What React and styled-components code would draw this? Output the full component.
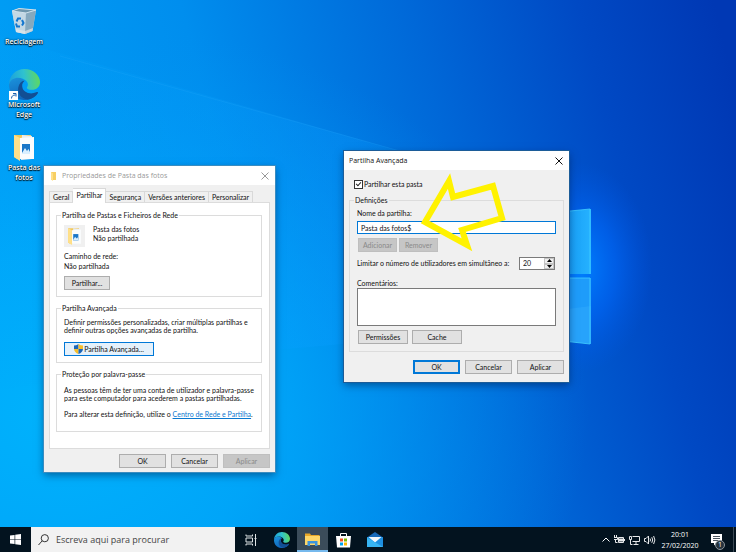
import { useState } from "react";
import styled, { createGlobalStyle, css } from "styled-components";

export default function App() {
  return (
    <>
      <GlobalStyle />
      <Screen>
        <Wallpaper />
        <Desktop>
          <Shortcut href="#reciclagem">
            <ShortcutPicture>
              <RecycleBinIcon />
            </ShortcutPicture>
            <ShortcutLabel>Reciclagem</ShortcutLabel>
          </Shortcut>
          <Shortcut href="#edge">
            <ShortcutPicture>
              <EdgeIcon id="desk" size={31} />
              <LinkArrow />
            </ShortcutPicture>
            <ShortcutLabel>Microsoft Edge</ShortcutLabel>
          </Shortcut>
          <Shortcut href="#fotos">
            <ShortcutPicture>
              <PhotoFolderIcon width={26} height={28} />
            </ShortcutPicture>
            <ShortcutLabel>Pasta das fotos</ShortcutLabel>
          </Shortcut>
        </Desktop>
        <PropertiesWindow />
        <SharingWindow />
        <Taskbar />
      </Screen>
    </>
  );
}

const tabs = [
  "Geral",
  "Partilhar",
  "Segurança",
  "Versões anteriores",
  "Personalizar",
];

function PropertiesWindow() {
  const [active, setActive] = useState("Partilhar");

  return (
    <Window $left={44} $top={166} $width={231}>
      <TitleBar $inactive>
        <PlainFolderIcon />
        <Title>Propriedades de Pasta das fotos</Title>
        <CloseButton />
      </TitleBar>
      <PropertiesBody>
        <TabList role="tablist">
          {tabs.map((tab) => (
            <Tab
              key={tab}
              role="tab"
              aria-selected={tab === active}
              $active={tab === active}
              onClick={() => setActive(tab)}
            >
              {tab}
            </Tab>
          ))}
        </TabList>
        <TabPanel role="tabpanel">
          <Group>
            <Legend>Partilha de Pastas e Ficheiros de Rede</Legend>
            <FolderRow>
              <FolderTile>
                <PhotoFolderIcon width={17} height={18} />
              </FolderTile>
              <FolderStatus>
                <span>Pasta das fotos</span>
                <span>Não partilhada</span>
              </FolderStatus>
            </FolderRow>
            <NetworkPath>
              <span>Caminho de rede:</span>
              <span>Não partilhada</span>
            </NetworkPath>
            <Button $width={46}>Partilhar...</Button>
          </Group>
          <Group>
            <Legend>Partilha Avançada</Legend>
            <Paragraph>
              Definir permissões personalizadas, criar múltiplas partilhas e
              <br />
              definir outras opções avançadas de partilha.
            </Paragraph>
            <Button $width={90} $hot>
              <ShieldIcon />
              Partilha Avançada...
            </Button>
          </Group>
          <PasswordGroup>
            <Legend>Proteção por palavra-passe</Legend>
            <Paragraph>
              As pessoas têm de ter uma conta de utilizador e palavra-passe
              <br />
              para este computador para acederem a pastas partilhadas.
            </Paragraph>
            <Paragraph>
              Para alterar esta definição, utilize o{" "}
              <TextLink href="#centro">Centro de Rede e Partilha</TextLink>.
            </Paragraph>
          </PasswordGroup>
        </TabPanel>
        <Actions $gap={5}>
          <Button $width={47}>OK</Button>
          <Button $width={47}>Cancelar</Button>
          <Button $width={47} disabled>
            Aplicar
          </Button>
        </Actions>
      </PropertiesBody>
    </Window>
  );
}

function SharingWindow() {
  const [shared, setShared] = useState(true);

  return (
    <Window $left={344} $top={151} $width={225} $focused>
      <TitleBar>
        <Title>Partilha Avançada</Title>
        <CloseButton />
      </TitleBar>
      <SharingBody>
        <CheckLabel>
          <Checkbox
            type="checkbox"
            checked={shared}
            onChange={(e) => setShared(e.target.checked)}
          />
          Partilhar esta pasta
        </CheckLabel>
        <Settings>
          <Legend>Definições</Legend>
          <FieldLabel htmlFor="share-name">Nome da partilha:</FieldLabel>
          <TextInput id="share-name" defaultValue="Pasta das fotos$" />
          <ButtonRow $gap={2}>
            <Button $width={39} disabled>
              Adicionar
            </Button>
            <Button $width={39} disabled>
              Remover
            </Button>
          </ButtonRow>
          <LimitRow>
            <label htmlFor="limit">
              Limitar o número de utilizadores em simultâneo a:
            </label>
            <Spinner>
              <SpinnerInput id="limit" defaultValue="20" />
              <SpinnerButtons>
                <SpinnerButton aria-label="Aumentar">
                  <svg width="5" height="3" viewBox="0 0 5 3">
                    <path d="M2.5 0L5 3H0z" />
                  </svg>
                </SpinnerButton>
                <SpinnerButton aria-label="Diminuir">
                  <svg width="5" height="3" viewBox="0 0 5 3">
                    <path d="M2.5 3L5 0H0z" />
                  </svg>
                </SpinnerButton>
              </SpinnerButtons>
            </Spinner>
          </LimitRow>
          <FieldLabel htmlFor="comments">Comentários:</FieldLabel>
          <TextArea id="comments" />
          <ButtonRow $gap={4}>
            <Button $width={50}>Permissões</Button>
            <Button $width={50}>Cache</Button>
          </ButtonRow>
        </Settings>
        <Actions $gap={8}>
          <Button $width={47} $primary>
            OK
          </Button>
          <Button $width={47}>Cancelar</Button>
          <Button $width={47}>Aplicar</Button>
        </Actions>
      </SharingBody>
      <Pointer viewBox="0 0 84 72" aria-hidden="true">
        <path d="M5 47L29 6L33 22L73 11L82 43L42 55L47 70Z" />
      </Pointer>
    </Window>
  );
}

function Taskbar() {
  return (
    <Bar>
      <StartButton aria-label="Iniciar">
        <svg width="11" height="11" viewBox="0 0 12 12" fill="#fff">
          <path d="M0 1.7L5 1v4.6H0zM5.7 .9L12 0v5.6H5.7zM0 6.4h5V11L0 10.3zM5.7 6.4H12V12l-6.3-.9z" />
        </svg>
      </StartButton>
      <SearchBox>
        <svg width="11" height="12" viewBox="0 0 11 12" fill="none" stroke="#333">
          <circle cx="6.8" cy="4.2" r="3.6" />
          <path d="M4.2 6.8L.5 11" />
        </svg>
        <SearchInput
          aria-label="Procurar"
          placeholder="Escreva aqui para procurar"
        />
      </SearchBox>
      <AppButton aria-label="Vista de tarefas">
        <svg width="12" height="12" viewBox="0 0 12 12" fill="none" stroke="#dfe4e6">
          <path d="M1 .5v1.500h6.500V.5M1 11.500V10h6.500v1.500M1 4h6.500v4H1zM10.500 0v12M9.500 4.500h2" />
        </svg>
      </AppButton>
      <AppButton aria-label="Microsoft Edge">
        <EdgeIcon id="bar" size={16} />
      </AppButton>
      <AppButton $active aria-label="Explorador de Ficheiros">
        <ExplorerIcon />
      </AppButton>
      <AppButton aria-label="Microsoft Store">
        <StoreIcon />
      </AppButton>
      <AppButton aria-label="Correio">
        <MailIcon />
      </AppButton>
      <Tray>
        <svg width="8" height="5" viewBox="0 0 8 5" fill="none" stroke="#fff">
          <path d="M.5 4.500L4 1l3.500 3.500" />
        </svg>
        <svg width="11" height="9" viewBox="0 0 11 9" fill="none" stroke="#e6e8ea">
          <path d="M.5 0v2M2.500 0v2M0 2.500h3.500v2H0M1.500 4.500v3h2" />
          <path d="M4.500 2.500h5v5h-5z" />
          <path d="M5 3.500h4v3H5zM10 4h1v2h-1z" fill="#e6e8ea" stroke="none" />
        </svg>
        <svg width="11" height="10" viewBox="0 0 11 10" fill="none" stroke="#e6e8ea">
          <path d="M3.500 1.500h7v5h-7M7 6.500v2.500M4.500 9.500h5M.5 1.500h2v3h-2zM1.500 4.500v5h2" />
        </svg>
        <svg width="12" height="10" viewBox="0 0 12 10" fill="none" stroke="#e6e8ea">
          <path d="M.5 3.500h1.500L4.500 1v8L2 6.500H.5z" />
          <path d="M6 3.500q1 1.500 0 3M7.800 2.200q1.800 2.800 0 5.600M9.600 1q2.600 4 0 8" />
        </svg>
      </Tray>
      <Clock>
        <span>20:01</span>
        <span>27/02/2020</span>
      </Clock>
      <NoticeButton aria-label="Notificações">
        <svg width="12" height="12" viewBox="0 0 12 12">
          <path d="M0 0h11v9H5.500L3 11.500V9H0z" fill="#fff" />
          <path d="M2 2.500h7M2 4.500h7M2 6.500h5" stroke="#4b5660" />
        </svg>
        <Badge>1</Badge>
      </NoticeButton>
    </Bar>
  );
}

function Wallpaper() {
  return (
    <Backdrop viewBox="0 0 736 552" preserveAspectRatio="none" aria-hidden="true">
      <defs>
        <linearGradient id="sky" x1="0" y1="0.35" x2="1" y2="0.16">
          <stop offset="0" stopColor="#00a0f6" />
          <stop offset="0.3" stopColor="#008eee" />
          <stop offset="0.6" stopColor="#0068d8" />
          <stop offset="0.82" stopColor="#0049c4" />
          <stop offset="1" stopColor="#0038b4" />
        </linearGradient>
        <radialGradient id="cyan" cx="0.08" cy="0.75" r="0.72">
          <stop offset="0" stopColor="#00b2fc" />
          <stop offset="0.4" stopColor="#00a9fa" stopOpacity="0.8" />
          <stop offset="1" stopColor="#0090f0" stopOpacity="0" />
        </radialGradient>
        <radialGradient id="glow" cx="0.5" cy="0.5" r="0.5">
          <stop offset="0" stopColor="#0080ff" />
          <stop offset="0.5" stopColor="#0068fa" stopOpacity="0.6" />
          <stop offset="1" stopColor="#0058e8" stopOpacity="0" />
        </radialGradient>
        <linearGradient id="beam" x1="0" y1="0" x2="1" y2="0">
          <stop offset="0" stopColor="#00aaff" stopOpacity="0.1" />
          <stop offset="0.7" stopColor="#0a9cff" stopOpacity="0.3" />
          <stop offset="1" stopColor="#0a9cff" stopOpacity="0" />
        </linearGradient>
        <linearGradient id="pane" x1="0.7" y1="0" x2="1" y2="0">
          <stop offset="0" stopColor="#149af4" />
          <stop offset="1" stopColor="#26b2ff" />
        </linearGradient>
      </defs>
      <rect width="736" height="552" fill="url(#sky)" />
      <rect width="736" height="552" fill="url(#cyan)" />
      <path d="M0 36L400 151L500 180V330L275 350L0 390Z" fill="url(#beam)" />
      <path d="M60 56L400 151" stroke="#3ab4ff" opacity="0.15" />
      <ellipse cx="580" cy="268" rx="72" ry="105" fill="url(#glow)" />
      <path d="M500 218L591 209V274H500z" fill="url(#pane)" />
      <path d="M500 278H591V344L500 334z" fill="#1e9cfa" />
      <path d="M500 318L591 306V344L500 334z" fill="#40b4ff" opacity="0.3" />
      <path d="M500 218L590 209V274M500 278H590V344L500 334" fill="none" stroke="#42cfff" opacity="0.8" />
    </Backdrop>
  );
}

function CloseButton() {
  return (
    <Close aria-label="Fechar">
      <svg width="8" height="8" viewBox="0 0 8 8" fill="none" stroke="currentColor">
        <path d="M.5 .5l7 7M7.500 .5l-7 7" />
      </svg>
    </Close>
  );
}

function RecycleBinIcon() {
  return (
    <svg width="26" height="28" viewBox="0 0 26 28">
      <path d="M1 4L8 1.500L25 3L21.500 24L14 27L5 25z" fill="#b9d3e2" />
      <path d="M1 4L15 6L14 27L5 25z" fill="#c3d8e4" />
      <path d="M15 6L25 3L21.500 24L14 27z" fill="#86a9be" />
      <path d="M5 22L14 24L22 21L21.500 24L14 27L5 25z" fill="#e3e8ea" opacity="0.7" />
      <path d="M1 4L8 1.500L25 3L15 6z" fill="#6f97ad" stroke="#cfe1ec" />
      <g fill="none" stroke="#1276cf" strokeWidth="2">
        <path d="M5.500 14.500l1.500-3h3" />
        <path d="M11 13l1.500 3-1.500 2.500" />
        <path d="M9 19.500H6l-1-3" />
      </g>
    </svg>
  );
}

function EdgeIcon({ id, size }) {
  return (
    <svg width={size} height={size} viewBox="0 0 32 32">
      <defs>
        <linearGradient id={`${id}-top`} x1="0" y1="0.5" x2="1" y2="0.4">
          <stop offset="0" stopColor="#1ba0dc" />
          <stop offset="0.5" stopColor="#2fc2cf" />
          <stop offset="1" stopColor="#61d95c" />
        </linearGradient>
        <linearGradient id={`${id}-left`} x1="0.2" y1="0" x2="0.6" y2="1">
          <stop offset="0" stopColor="#1a90da" />
          <stop offset="1" stopColor="#0f62b8" />
        </linearGradient>
      </defs>
      <path d="M0 16C0 22 3 31 15 32C21 32.500 28 29 30 24C25 27 15 26 14 19C13 15 15 13 16 12C10 6 1 9 0 16z" fill={`url(#${id}-left)`} />
      <path d="M12 14C7 20 9 30 19 31.500C24 31 28 28 30 24.500C30 23.500 29 23.500 28 24C22 27 14 24 13.500 18C13 15 15 13 16 12C14 12 13 13 12 14z" fill="#124f94" />
      <path d="M0 16C0 7 7 0 16 0C25 0 32 6.500 32 13.500C32 19 28 21.500 24 21.500C20 21.500 18 20 18.500 19C20 17 20 15 18 12.500C14 7.500 2 7 0 16z" fill={`url(#${id}-top)`} />
    </svg>
  );
}

function PhotoFolderIcon({ width, height }) {
  return (
    <svg width={width} height={height} viewBox="0 0 26 28">
      <path d="M3 2H20V26H6L3 24z" fill="#f3c95c" />
      <path d="M11 2L21 3V26L10 27z" fill="#e8edf1" />
      <path d="M9 5L23 4V26H9z" fill="#fafcfd" />
      <path d="M3 2L9 5V28L3 24z" fill="#ffe08a" />
      <path d="M11 11h8v10h-8z" fill="#1976c8" />
      <path d="M11 20l3-5 2 3 1.500-2 1.500 3v2h-8z" fill="#d9efff" />
    </svg>
  );
}

function PlainFolderIcon() {
  return (
    <svg width="8" height="10" viewBox="0 0 8 10">
      <path d="M2 1h5v8H2z" fill="#f7cf63" />
      <path d="M2 1l2 1.500V10L2 8.500z" fill="#ffe08a" />
    </svg>
  );
}

function LinkArrow() {
  return (
    <LinkArrowBox viewBox="0 0 9 9">
      <path d="M0 0h9v9H0z" fill="#fff" />
      <path d="M2.500 7.500C2.500 5 4 4 6.500 4M4 2.500h3v3" fill="none" stroke="#1c62b0" />
    </LinkArrowBox>
  );
}

function ShieldIcon() {
  return (
    <svg width="9" height="10" viewBox="0 0 9 10">
      <path d="M4.500 0Q2.500 1.500 0 1.500V5H4.500z" fill="#1c66b8" />
      <path d="M4.500 0Q6.500 1.500 9 1.500V5H4.500z" fill="#f6bd28" />
      <path d="M0 5Q.5 8.500 4.500 10V5z" fill="#f6bd28" />
      <path d="M9 5Q8.500 8.500 4.500 10V5z" fill="#1c66b8" />
    </svg>
  );
}

function ExplorerIcon() {
  return (
    <svg width="15" height="13" viewBox="0 0 15 13">
      <path d="M0 .5h5l1 1.500h8.500V12H0z" fill="#e9a828" />
      <path d="M0 3h15v9H0z" fill="#ffd768" />
      <path d="M2.500 13V8h10v5h-2.500v-2.500H5V13z" fill="#3c94dc" />
    </svg>
  );
}

function StoreIcon() {
  return (
    <svg width="15" height="16" viewBox="0 0 15 16">
      <path d="M4.500 5V1.500h6V5" fill="none" stroke="#fff" />
      <path d="M0 4h15l-1 11.500H1z" fill="#fff" />
      <path d="M4 6.500h3v3H4z" fill="#f25022" />
      <path d="M8 6.500h3v3H8z" fill="#7fba00" />
      <path d="M4 10.500h3v3H4z" fill="#00a4ef" />
      <path d="M8 10.500h3v3H8z" fill="#ffb900" />
    </svg>
  );
}

function MailIcon() {
  return (
    <svg width="16" height="15" viewBox="0 0 16 15">
      <path d="M0 5.500L8 0l8 5.500z" fill="#1668b8" />
      <path d="M0 5h16v10H0z" fill="#1e8fe0" />
      <path d="M1.500 5h13L8 10.500z" fill="#f2f7fb" />
      <path d="M0 5.500L16 15H0z" fill="#37b4f2" />
    </svg>
  );
}

const uiFont = `Lato, "Liberation Sans", sans-serif`;
const shellFont = `"Open Sans", "Noto Sans", sans-serif`;

const GlobalStyle = createGlobalStyle`
  *, *::before, *::after {
    box-sizing: border-box;
  }

  body {
    margin: 0;
    overflow: hidden;
  }

  svg {
    display: block;
    flex-shrink: 0;
  }

  button, input, textarea {
    margin: 0;
    padding: 0;
    border: 0;
    border-radius: 0;
    outline: 0;
    font: inherit;
    color: inherit;
  }
`;

const Screen = styled.div`
  position: relative;
  display: flex;
  flex-direction: column;
  min-height: 100vh;
  background: #0078e0;
  font-family: ${uiFont};
  font-size: 7px;
  line-height: 9px;
  color: #111;
`;

const Backdrop = styled.svg`
  position: absolute;
  inset: 0;
  width: 100%;
  height: 100%;
`;

const Desktop = styled.main`
  position: relative;
  flex: 1;
  padding-top: 5px;
`;

const Shortcut = styled.a`
  display: flex;
  flex-direction: column;
  align-items: center;
  width: 48px;
  height: 63px;
  color: #fff;
  font-family: ${shellFont};
  font-weight: 600;
  text-align: center;
  text-decoration: none;
`;

const ShortcutPicture = styled.span`
  position: relative;
  display: flex;
  align-items: center;
  height: 32px;
`;

const ShortcutLabel = styled.span`
  max-width: 42px;
  line-height: 10px;
  text-shadow: 0 1px 1px #000, 0 0 2px #000;
`;

const LinkArrowBox = styled.svg`
  position: absolute;
  left: 0;
  bottom: 0;
  width: 9px;
  height: 9px;
`;

const Window = styled.section`
  position: absolute;
  left: ${(p) => p.$left}px;
  top: ${(p) => p.$top}px;
  width: ${(p) => p.$width}px;
  background: #f0f0f0;
  outline: 1px solid ${(p) => (p.$focused ? "#1c5c98" : "#3a8cc0")};
  box-shadow: 0 3px 8px rgba(0, 20, 60, 0.5);
`;

const TitleBar = styled.header`
  display: flex;
  align-items: center;
  gap: 5px;
  height: 19px;
  padding: 0 6px 0 5px;
  background: #fff;
  color: ${(p) => (p.$inactive ? "#999" : "#111")};
  font-family: ${shellFont};
`;

const Title = styled.h2`
  flex: 1;
  margin: 0;
  font-size: 7px;
  font-weight: normal;
`;

const Close = styled.button`
  background: none;
`;

const PropertiesBody = styled.div`
  padding: 3px 5px 4px;
`;

const TabList = styled.div`
  display: flex;
  align-items: flex-end;
`;

const Tab = styled.button`
  height: 11px;
  padding: 0 3px;
  border: 1px solid #d9d9d9;
  border-bottom: 0;
  border-left-width: 0;
  background: #f0f0f0;
  white-space: nowrap;

  &:first-child {
    border-left-width: 1px;
  }

  ${(p) =>
    p.$active &&
    css`
      position: relative;
      height: 15px;
      margin-bottom: -1px;
      padding-bottom: 2px;
      background: #fff;
    `}
`;

const TabPanel = styled.div`
  display: flex;
  flex-direction: column;
  gap: 7px;
  padding: 8px 7px 16px 6px;
  border: 1px solid #dcdcdc;
  background: #fff;
`;

const Group = styled.fieldset`
  min-width: 0;
  margin: 0;
  padding: 5px 7px 6px;
  border: 1px solid #dcdcdc;
`;

const PasswordGroup = styled(Group)`
  padding: 7px 7px 5px;
`;

const Legend = styled.legend`
  margin-left: -3px;
  padding: 0 1px;
`;

const FolderRow = styled.div`
  display: flex;
  gap: 8px;
`;

const FolderTile = styled.div`
  display: grid;
  place-items: center;
  width: 21px;
  height: 22px;
  background: #f0f0f0;
`;

const FolderStatus = styled.div`
  display: flex;
  flex-direction: column;
`;

const NetworkPath = styled.div`
  display: flex;
  flex-direction: column;
  gap: 1px;
  padding: 5px 0;
`;

const Paragraph = styled.p`
  margin: 0 0 8px;
  line-height: 8px;
  white-space: nowrap;
`;

const TextLink = styled.a`
  color: #0a78d0;
`;

const Button = styled.button`
  display: flex;
  align-items: center;
  justify-content: center;
  gap: 1px;
  width: ${(p) => p.$width}px;
  height: 14px;
  border: 1px solid #adadad;
  background: #e1e1e1;
  white-space: nowrap;

  ${(p) =>
    p.$hot &&
    css`
      border-color: #0078d7;
      background: #e5f1fb;
    `}

  ${(p) =>
    p.$primary &&
    css`
      border: 2px solid #0078d7;
    `}

  &:disabled {
    border-color: #bfbfbf;
    background: #c6c6c6;
    color: #8a8a8a;
  }
`;

const Actions = styled.div`
  display: flex;
  justify-content: flex-end;
  gap: 5px;
  padding-top: ${(p) => p.$gap}px;
`;

const SharingBody = styled.div`
  padding: 10px 5px 8px;
`;

const CheckLabel = styled.label`
  display: flex;
  align-items: center;
  gap: 1px;
  margin: 0 5px 7px;
`;

const Checkbox = styled.input`
  appearance: none;
  width: 9px;
  height: 9px;
  border: 1px solid #333;
  background: #fff;

  &:checked::after {
    content: "";
    display: block;
    width: 3px;
    height: 5px;
    margin-left: 2px;
    border: solid #222;
    border-width: 0 1px 1px 0;
    transform: rotate(42deg);
  }
`;

const Settings = styled(Group)`
  display: flex;
  flex-direction: column;
  padding: 4px 7px 7px;
`;

const FieldLabel = styled.label`
  display: block;
`;

const TextInput = styled.input`
  width: 100%;
  height: 13px;
  margin: 3px 0 4px;
  padding: 0 3px;
  border: 1px solid #0078d7;
  background: #fff;
`;

const ButtonRow = styled.div`
  display: flex;
  gap: ${(p) => p.$gap}px;
  padding-left: 1px;
`;

const LimitRow = styled.div`
  display: flex;
  align-items: center;
  justify-content: space-between;
  margin: 5px 1px 9px 0;
  white-space: nowrap;
`;

const Spinner = styled.span`
  display: flex;
  width: 36px;
  height: 13px;
  border: 1px solid #7a7a7a;
  background: #fff;
`;

const SpinnerInput = styled.input`
  flex: 1;
  min-width: 0;
  padding-left: 3px;
  background: none;
`;

const SpinnerButtons = styled.span`
  display: flex;
  flex-direction: column;
  width: 10px;
`;

const SpinnerButton = styled.button`
  display: grid;
  flex: 1;
  place-items: center;
  border: 1px solid #c4c4c4;
  background: #f0f0f0;
`;

const TextArea = styled.textarea`
  width: 100%;
  height: 38px;
  margin-bottom: 4px;
  border: 1px solid #7a7a7a;
  background: #fff;
  resize: none;
`;

const Pointer = styled.svg`
  position: absolute;
  left: 76px;
  top: 24px;
  width: 84px;
  height: 72px;
  overflow: visible;
  fill: none;
  stroke: #fff200;
  stroke-width: 6px;
  pointer-events: none;
`;

const Bar = styled.footer`
  position: relative;
  display: flex;
  height: 25px;
  background: #03131f;
  color: #fff;
  font-family: ${shellFont};
`;

const StartButton = styled.button`
  display: grid;
  place-items: center;
  width: 31px;
  background: none;
`;

const SearchBox = styled.label`
  display: flex;
  align-items: center;
  gap: 7px;
  width: 204px;
  padding: 0 7px;
  background: #f2f2f2;
`;

const SearchInput = styled.input`
  flex: 1;
  min-width: 0;
  background: none;
  font-size: 9px;
  line-height: 12px;

  &::placeholder {
    color: #444;
    opacity: 1;
  }
`;

const AppButton = styled.button`
  display: grid;
  place-items: center;
  width: 31px;
  background: ${(p) => (p.$active ? "#3b4c5a" : "none")};
  box-shadow: ${(p) => (p.$active ? "inset 0 -2px #76b9ed" : "none")};
`;

const Tray = styled.div`
  display: flex;
  align-items: center;
  gap: 4px;
  margin-left: auto;
`;

const Clock = styled.time`
  display: flex;
  flex-direction: column;
  justify-content: center;
  width: 48px;
  line-height: 11px;
  text-align: center;
`;

const NoticeButton = styled.button`
  position: relative;
  display: grid;
  place-items: center;
  width: 30px;
  margin-right: 2px;
  padding-right: 4px;
  border-right: 1px solid #3c4a55;
  background: none;
`;

const Badge = styled.span`
  position: absolute;
  left: 11px;
  bottom: 2px;
  width: 10px;
  height: 10px;
  border: 1px solid #8a949b;
  border-radius: 50%;
  background: #26333d;
  font-size: 7px;
  line-height: 8px;
`;
